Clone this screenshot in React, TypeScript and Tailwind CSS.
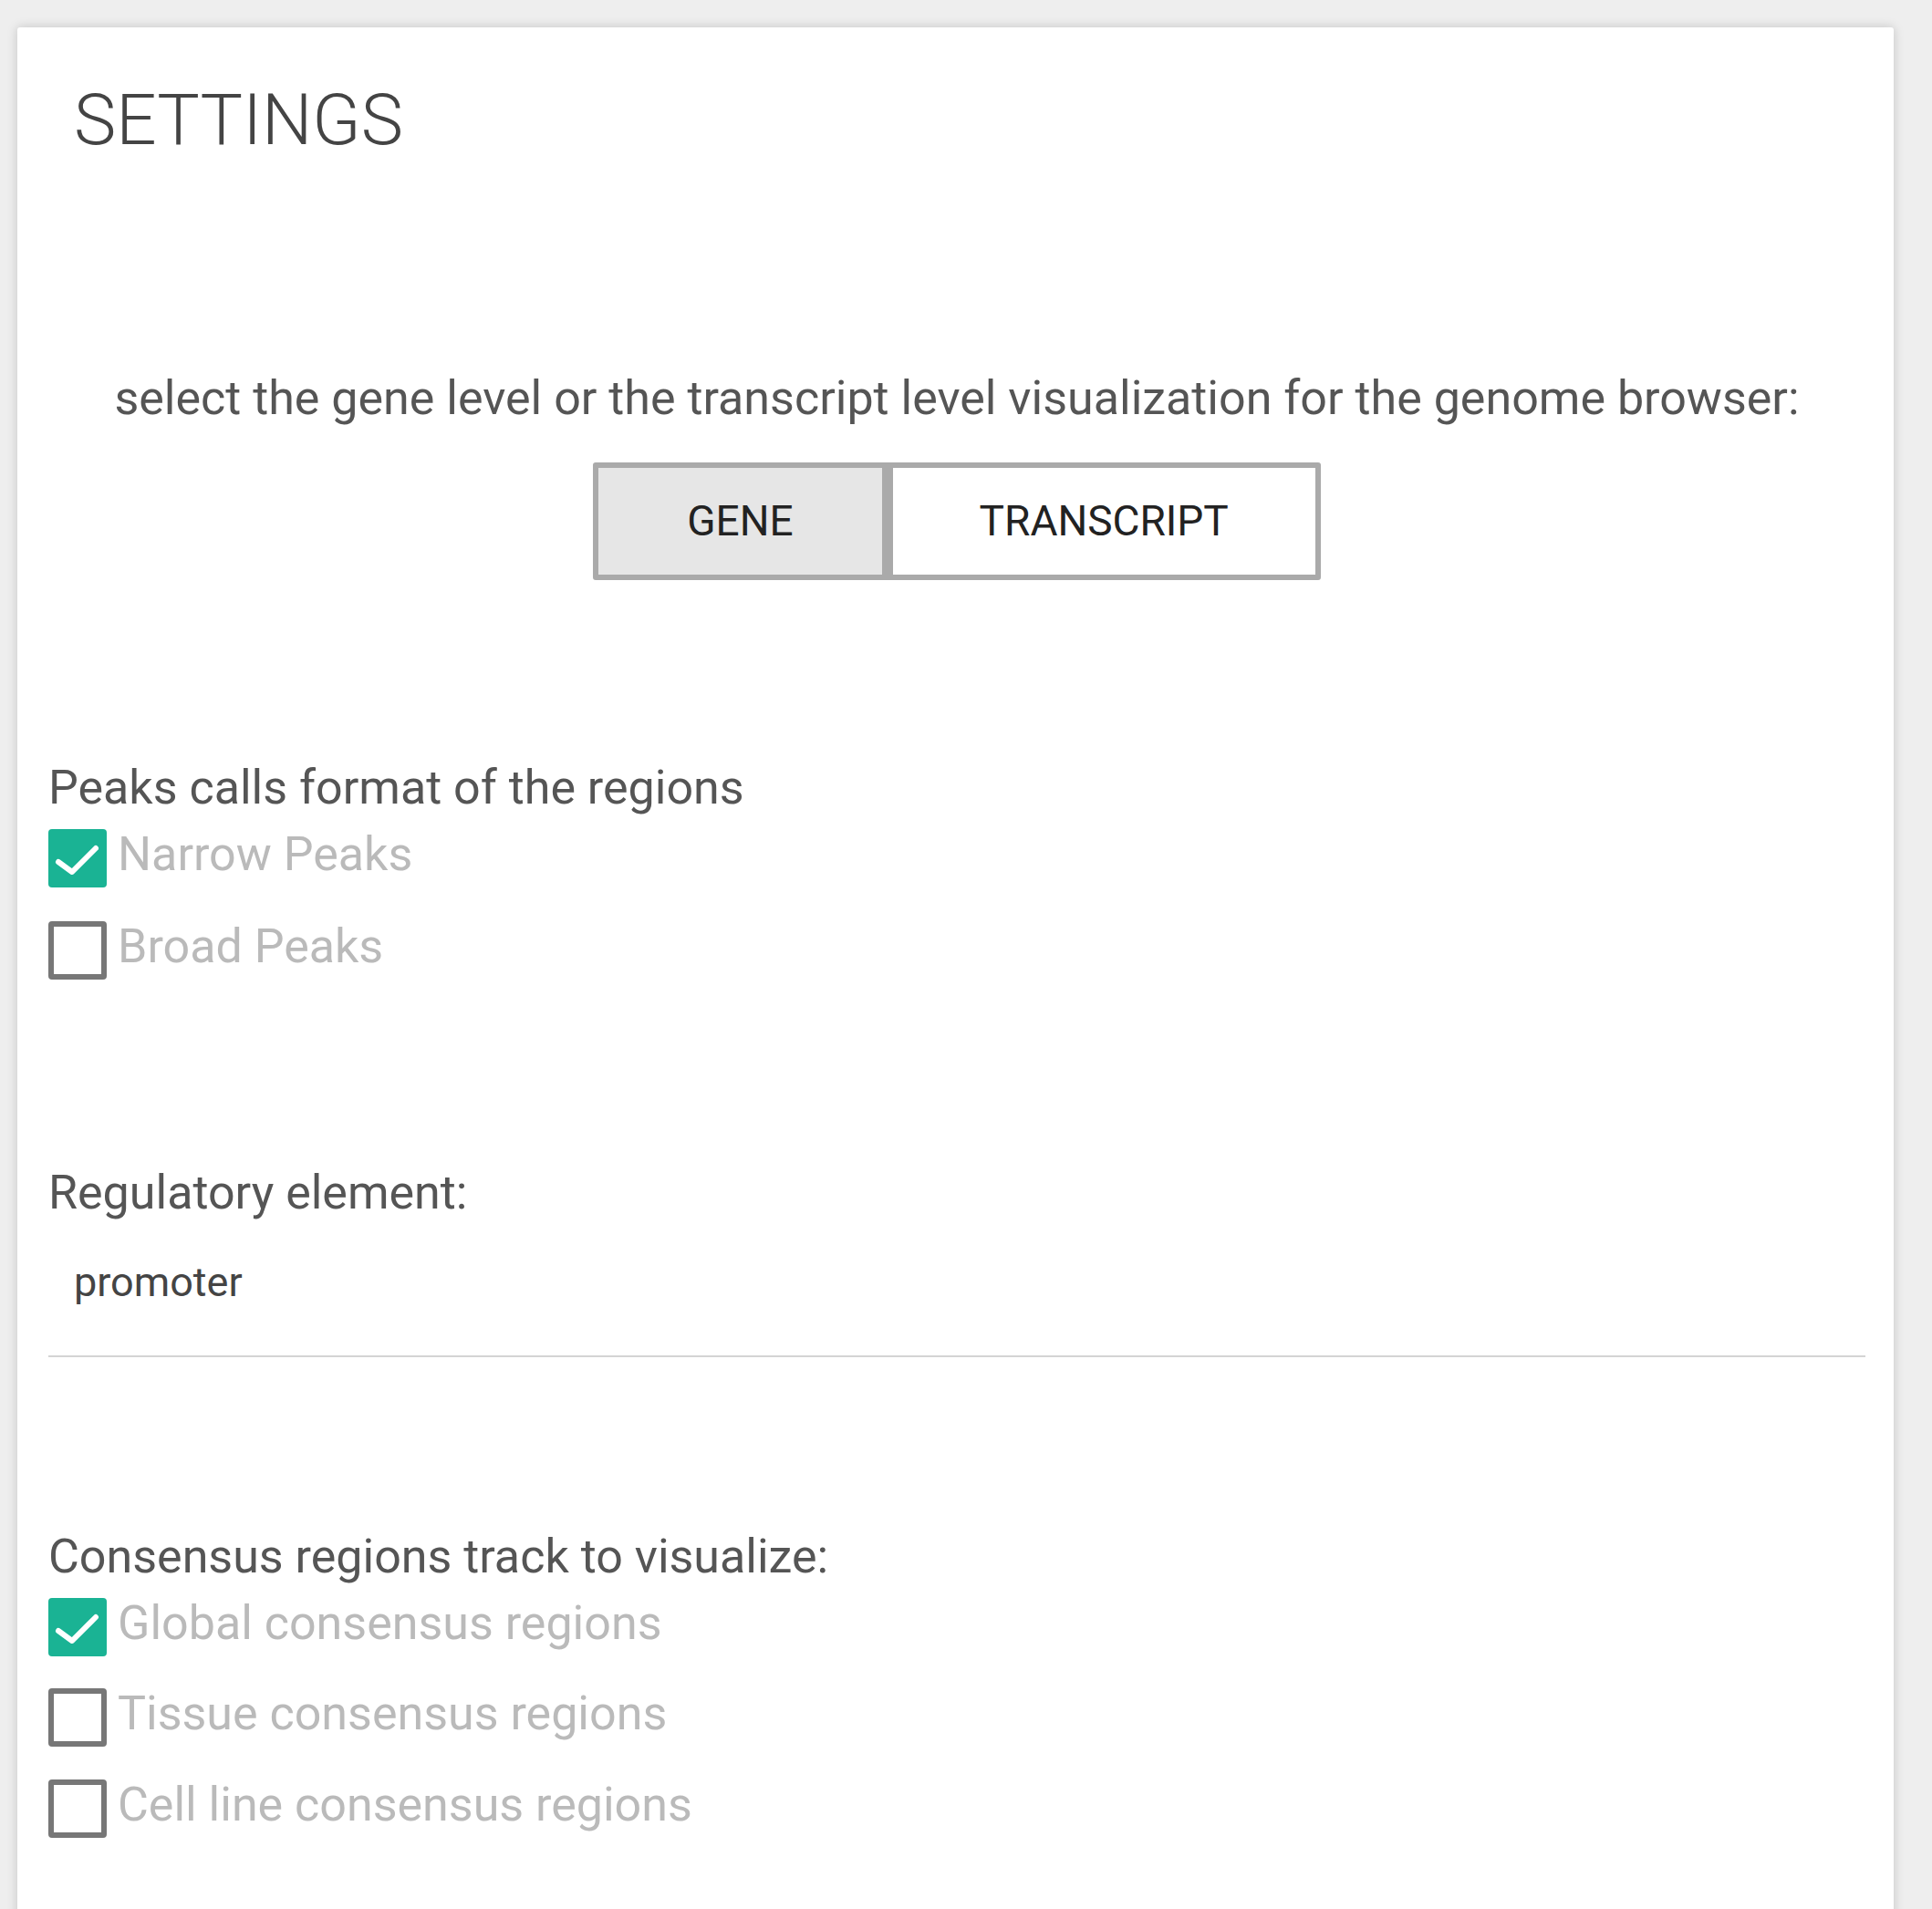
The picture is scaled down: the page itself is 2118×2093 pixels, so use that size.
import React, { useState } from 'react';

/**
 * Settings card - genome browser level + track options
 */

const FONT = { fontFamily: 'Roboto, "Noto Sans", "Liberation Sans", sans-serif' };

type Option = { id: string; label: string; checked: boolean };

const PEAK_OPTIONS: Option[] = [
  { id: 'narrow', label: 'Narrow Peaks', checked: true },
  { id: 'broad', label: 'Broad Peaks', checked: false },
];

const CONSENSUS_OPTIONS: Option[] = [
  { id: 'global', label: 'Global consensus regions', checked: true },
  { id: 'tissue', label: 'Tissue consensus regions', checked: false },
  { id: 'cell', label: 'Cell line consensus regions', checked: false },
];

function CheckBox({ checked }: { checked: boolean }) {
  if (checked) {
    return (
      <span className="w-[64px] h-[64px] rounded-[4px] bg-[#1ab394] flex items-center justify-center flex-shrink-0">
        <svg width="64" height="64" viewBox="0 0 64 64" fill="none">
          <path d="M11 36 L26 47 L52 21" stroke="white" strokeWidth="6" strokeLinecap="round" strokeLinejoin="round" />
        </svg>
      </span>
    );
  }
  return <span className="w-[64px] h-[64px] rounded-[4px] border-[6px] border-[#777777] bg-white flex-shrink-0" />;
}

function OptionList({ options, gaps }: { options: Option[]; gaps: string[] }) {
  return (
    <div className="flex flex-col">
      {options.map((opt, i) => (
        <label key={opt.id} className={`flex items-center h-[64px] ${gaps[i]}`}>
          <CheckBox checked={opt.checked} />
          {/* bottom padding nudges the text a few px above the box centre */}
          <span className="ml-[12px] pb-[8px] text-[52px] leading-[52px] text-[#bababa]">{opt.label}</span>
        </label>
      ))}
    </div>
  );
}

export default function App() {
  const [level, setLevel] = useState<'gene' | 'transcript'>('gene');

  return (
    <div className="min-h-screen bg-[#eeeeee] pt-[30px] pl-[19px] overflow-hidden" style={FONT}>
      <div className="w-[2057px] bg-white rounded-[3px] shadow-[0_0_12px_rgba(0,0,0,0.18)] pl-[34px] pr-[31px] pt-[63px] pb-[120px]">
        {/* Title */}
        <h1 className="pl-[28px] text-[78px] leading-[78px] font-light text-[#444444]">SETTINGS</h1>

        {/* Gene / transcript toggle */}
        <p className="mt-[240px] text-center text-[52px] leading-[52px] text-[#555555]">
          select the gene level or the transcript level visualization for the genome browser:
        </p>
        <div className="mt-[44px] flex justify-center">
          <div className="flex h-[129px]">
            <button
              onClick={() => setLevel('gene')}
              className={`px-[97px] border-[6px] border-[#aaaaaa] rounded-l-[3px] text-[46px] text-[#222222] ${
                level === 'gene' ? 'bg-[#e6e6e6]' : 'bg-white'
              }`}
            >
              GENE
            </button>
            <button
              onClick={() => setLevel('transcript')}
              className={`px-[95px] border-[6px] border-[#aaaaaa] rounded-r-[3px] text-[46px] text-[#222222] ${
                level === 'transcript' ? 'bg-[#e6e6e6]' : 'bg-white'
              }`}
            >
              TRANSCRIPT
            </button>
          </div>
        </div>

        {/* Peaks format */}
        <h3 className="mt-[202px] text-[52px] leading-[52px] text-[#555555]">Peaks calls format of the regions</h3>
        <OptionList options={PEAK_OPTIONS} gaps={['mt-[19px]', 'mt-[37px]']} />

        {/* Regulatory element */}
        <h3 className="mt-[208px] text-[52px] leading-[52px] text-[#555555]">Regulatory element:</h3>
        <div className="border-b-2 border-[#d4d4d4] pb-[58px]">
          <div className="mt-[49px] pl-[28px] text-[45px] leading-[45px] text-[#444444]">promoter</div>
        </div>

        {/* Consensus tracks */}
        <h3 className="mt-[193px] text-[52px] leading-[52px] text-[#555555]">Consensus regions track to visualize:</h3>
        <OptionList options={CONSENSUS_OPTIONS} gaps={['mt-[19px]', 'mt-[35px]', 'mt-[36px]']} />
      </div>
    </div>
  );
}
